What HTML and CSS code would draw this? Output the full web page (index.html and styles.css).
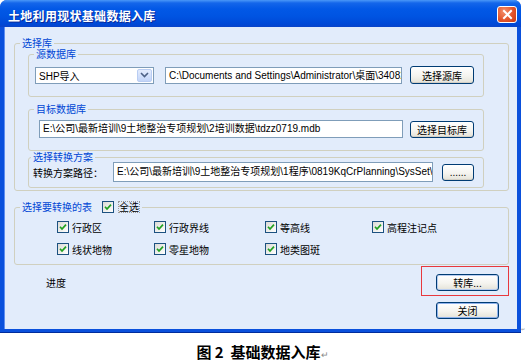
FILE: index.html
```html
<!DOCTYPE html>
<html lang="zh-CN">
<head>
  <meta charset="UTF-8">
  <title>土地利用现状基础数据入库</title>
  <link rel="stylesheet" href="styles.css">
</head>
<body>
  <div id="figure">
    <!-- Dialog window -->
    <div class="window">
      <div class="titlebar">
        <span class="title">土地利用现状基础数据入库</span>
        <span class="close-btn">
          <svg width="11" height="11" viewBox="0 0 11 11"><path d="M2 2 L9 9 M9 2 L2 9" stroke="#fff" stroke-width="2" stroke-linecap="square"/></svg>
        </span>
      </div>

      <div class="client">
        <!-- 选择库 -->
        <fieldset class="group outer">
          <legend>选择库</legend>

          <fieldset class="group src">
            <legend>源数据库</legend>
            <div class="row">
              <div class="combo">
                <span class="combo-text">SHP导入</span>
                <span class="combo-btn">
                  <svg width="9" height="6" viewBox="0 0 9 6"><path d="M1 1 L4.5 4.5 L8 1" fill="none" stroke="#4d6185" stroke-width="1.6"/></svg>
                </span>
              </div>
              <div class="textbox path-src">C:\Documents and Settings\Administrator\桌面\340825\土地利用现状</div>
              <button class="btn btn-pick">选择源库</button>
            </div>
          </fieldset>

          <fieldset class="group tgt">
            <legend>目标数据库</legend>
            <div class="row">
              <div class="textbox path-tgt">E:\公司\最新培训\9土地整治专项规划\2培训数据\tdzz0719.mdb</div>
              <button class="btn btn-pick btn-tgt">选择目标库</button>
            </div>
          </fieldset>

          <fieldset class="group plan">
            <legend>选择转换方案</legend>
            <div class="row plan-row">
              <span class="plan-label">转换方案路径：</span>
              <div class="textbox path-plan">E:\公司\最新培训\9土地整治专项规划\1程序\0819KqCrPlanning\SysSet\Plan.xml</div>
              <button class="btn btn-dots">......</button>
            </div>
          </fieldset>
        </fieldset>

        <!-- 选择要转换的表 -->
        <fieldset class="group tables">
          <legend>选择要转换的表<span class="check-all"><span class="check"><svg width="8" height="8" viewBox="0 0 8 8"><path d="M1 3.8 L3 6 L7 1.6" fill="none" stroke="#21a121" stroke-width="1.7"/></svg></span><span class="focus-text">全选</span></span></legend>
          <div class="check-grid">
            <label class="item"><span class="check"><svg width="8" height="8" viewBox="0 0 8 8"><path d="M1 3.8 L3 6 L7 1.6" fill="none" stroke="#21a121" stroke-width="1.7"/></svg></span>行政区</label>
            <label class="item"><span class="check"><svg width="8" height="8" viewBox="0 0 8 8"><path d="M1 3.8 L3 6 L7 1.6" fill="none" stroke="#21a121" stroke-width="1.7"/></svg></span>行政界线</label>
            <label class="item"><span class="check"><svg width="8" height="8" viewBox="0 0 8 8"><path d="M1 3.8 L3 6 L7 1.6" fill="none" stroke="#21a121" stroke-width="1.7"/></svg></span>等高线</label>
            <label class="item"><span class="check"><svg width="8" height="8" viewBox="0 0 8 8"><path d="M1 3.8 L3 6 L7 1.6" fill="none" stroke="#21a121" stroke-width="1.7"/></svg></span>高程注记点</label>
            <label class="item"><span class="check"><svg width="8" height="8" viewBox="0 0 8 8"><path d="M1 3.8 L3 6 L7 1.6" fill="none" stroke="#21a121" stroke-width="1.7"/></svg></span>线状地物</label>
            <label class="item"><span class="check"><svg width="8" height="8" viewBox="0 0 8 8"><path d="M1 3.8 L3 6 L7 1.6" fill="none" stroke="#21a121" stroke-width="1.7"/></svg></span>零星地物</label>
            <label class="item"><span class="check"><svg width="8" height="8" viewBox="0 0 8 8"><path d="M1 3.8 L3 6 L7 1.6" fill="none" stroke="#21a121" stroke-width="1.7"/></svg></span>地类图斑</label>
          </div>
        </fieldset>

        <!-- Progress + actions -->
        <div class="bottom">
          <span class="progress-label">进度</span>
          <div class="highlight">
            <button class="btn btn-action">转库...</button>
          </div>
        </div>
        <button class="btn btn-action btn-close">关闭</button>
      </div>
    </div>
    <span class="para-mark">↵</span>
  </div>

  <p class="caption">图 2&nbsp; 基础数据入库<span class="para">↵</span></p>
</body>
</html>
```

FILE: styles.css
```css
/* Base reset */
* { margin: 0; padding: 0; box-sizing: border-box; }
body {
  font-family: "Liberation Sans", "Noto Sans CJK SC", sans-serif;
  font-size: 10px; color: #000; background: #fff;
  width: 525px; height: 363px; overflow: hidden;
}

#figure { display: flex; align-items: flex-end; }
.para-mark { font-size: 5px; color: #999; line-height: 6px; margin: 0 0 1px 0; }

/* Window frame */
.window {
  width: 521px; height: 333px; flex: none;
  display: flex; flex-direction: column;
  background: #0a50dc; border-radius: 7px 7px 0 0;
  border-bottom: 1px solid #002c9c;
}
.titlebar {
  height: 27px; flex: none;
  display: flex; justify-content: space-between; align-items: center;
  padding: 3px 4px 0 8px;
  border-radius: 7px 7px 0 0;
  background: linear-gradient(#4a98f8 0, #1466ea 3px, #0258e6 9px, #0054e2 60%, #0048d6 90%, #0a44c8 100%);
}
.title {
  color: #fff; font-family: "Noto Sans CJK SC", sans-serif; font-weight: bold;
  font-size: 12px; letter-spacing: 0.3px; text-shadow: 1px 1px 0 #0a2a98;
}
.close-btn {
  width: 20px; height: 17px; margin-top: -2px;
  display: flex; align-items: center; justify-content: center;
  border: 1px solid #fff; border-radius: 3px;
  background: radial-gradient(circle at 35% 30%, #f3906c, #e2542a 55%, #c83a14);
}

.client {
  flex: 1; margin: 0 4px 3px;
  background: #e2ecfb;
  border-left: 1px solid #5e8ef0;
  padding: 10px 8px 0 9px;
  display: flex; flex-direction: column;
}

/* Group boxes (legend offset is measured from the padding edge) */
.group {
  border: 1px solid #d0d0bf; border-radius: 3px; min-width: 0;
}
.group legend {
  color: #0046d5; line-height: 12px; padding: 0 2px;
  font-family: "Noto Sans CJK SC", sans-serif;
}
.outer { padding: 0 24px 2px 13px; }
.outer > legend { margin-left: -8px; }
.src { margin-top: -1px; padding: 5px 9px 11px 6px; }
.src > legend { margin-left: -1px; }
.tgt { margin-top: 6px; padding: 4px 9px 11px 10px; }
.tgt > legend { margin-left: -5px; }
.plan { padding: 0 9px 5px 4px; }
.plan > legend { margin-left: -2px; }

.row { display: flex; align-items: center; height: 20px; }
.plan-row { margin-top: -1px; }

/* Inputs */
.textbox {
  height: 17px; background: #fff; border: 1px solid #7f9db9;
  padding: 0 3px; line-height: 15px;
  white-space: nowrap; overflow: hidden;
}
.combo {
  width: 119px; height: 17px; display: flex; align-items: center;
  background: #fff; border: 1px solid #7f9db9;
}
.combo-text { flex: 1; padding-left: 3px; }
.combo-btn {
  width: 15px; height: 13px; margin-right: 1px;
  display: flex; align-items: center; justify-content: center;
  border-radius: 2px; border: 1px solid #b9cdf3;
  background: linear-gradient(#e4ecfd, #c3d5f8);
}
.path-src { width: 237px; margin-left: 11px; }
.path-tgt { width: 364px; height: 18px; }
.path-plan { width: 320px; height: 20px; line-height: 18px; margin-left: 10px; }
.plan-label { width: 70px; font-family: "Noto Sans CJK SC", sans-serif; }

/* Buttons */
.btn {
  font: inherit; color: #000; cursor: pointer;
  height: 17px; border: 1px solid #003c74; border-radius: 3px;
  background: linear-gradient(#ffffff, #f5f4ef 55%, #e4e2d8);
  box-shadow: inset 0 -1px 0 #d4d0c6;
  font-family: "Noto Sans CJK SC", sans-serif;
}
.btn-pick { width: 64px; height: 18px; margin-left: 8px; }
.btn-tgt { height: 17px; margin-left: 7px; }
.btn-dots { width: 32px; margin-left: 9px; font-family: "Liberation Sans", sans-serif; }
.btn-action { width: 63px; height: 17px; box-shadow: inset 0 0 0 1px #b8cdf0; }
.btn-close { align-self: flex-end; margin: 6px 10px 0 0; box-shadow: inset 0 0 0 1px #8fb2ec; }

/* Table checklist */
.tables { margin-top: 10px; padding: 3px 0 4px 42px; }
.tables > legend { margin-left: -37px; }
.check-all { display: inline-flex; align-items: center; margin-left: 10px; color: #000; }
.focus-text { outline: 1px dotted #9a9a9a; outline-offset: -1px; padding: 0 1px; margin-left: 1px; }
.check-grid {
  display: grid; grid-template-columns: 97px 111px 107px auto;
  grid-auto-rows: 22px;
}
.item { display: flex; align-items: center; font-family: "Noto Sans CJK SC", sans-serif; }
.check {
  width: 12px; height: 12px; margin-right: 3px; flex: none;
  display: inline-flex; align-items: center; justify-content: center;
  border: 1px solid #1c5180;
  background: linear-gradient(135deg, #dcdbd5, #fff);
}

/* Bottom area */
.bottom { display: flex; justify-content: space-between; align-items: center; }
.progress-label { margin-left: 32px; padding-top: 4px; font-family: "Noto Sans CJK SC", sans-serif; }
.highlight {
  width: 88px; height: 30px; margin-top: 1px;
  border: 1px solid #e8383d;
  padding: 7px 0 0 14px;
}

/* Figure caption */
.caption {
  margin-top: 9px; text-align: center;
  font-family: "Noto Sans CJK SC", sans-serif; font-weight: bold;
  font-size: 15px; line-height: 20px;
}
.para { font-size: 9px; font-weight: normal; color: #888; }
```
